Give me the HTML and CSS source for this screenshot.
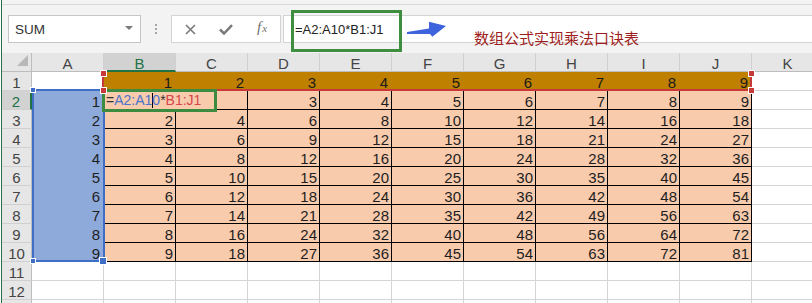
FILE: index.html
```html
<!DOCTYPE html>
<html lang="zh-CN">
<head>
<meta charset="utf-8">
<title>数组公式实现乘法口诀表</title>
<link rel="stylesheet" href="styles.css">
</head>
<body>
<div class="app">
  <div class="edge"></div>
  <div class="fbar">
    <div class="namebox"><span>SUM</span><span class="dd"></span></div>
    <div class="grip"><i></i><i></i><i></i></div>
    <div class="fbtns">
      <span class="btn"><svg width="11" height="11" viewBox="0 0 11 11"><path d="M1 1L10 10M10 1L1 10" stroke="#7a7a7a" stroke-width="1.6" fill="none"/></svg></span>
      <span class="btn"><svg width="14" height="11" viewBox="0 0 14 11"><path d="M1 5.5L5 9.5L13 1.2" stroke="#7a7a7a" stroke-width="2.5" fill="none"/></svg></span>
      <span class="btn fx"><i>f</i><i class="sx">x</i></span>
    </div>
    <div class="finput">
      <span class="ftext">=A2:A10*B1:J1</span>
      <svg class="arrow" width="40" height="16" viewBox="0 0 40 16"><polygon points="0,11 22,7.5 22,0.7 39,5 25.3,15.7 23,13 0,13" fill="#3d63dd"/></svg>
      <span class="note">数组公式实现乘法口诀表</span>
      <div class="hl"></div>
    </div>
  </div>
  <div class="sheet">
    <div class="grid">
      <div class="corner"></div><div class="ch">A</div><div class="ch sel">B</div><div class="ch">C</div><div class="ch">D</div><div class="ch">E</div><div class="ch">F</div><div class="ch">G</div><div class="ch">H</div><div class="ch">I</div><div class="ch">J</div><div class="ch">K</div>

      <div class="rh">1</div><div></div><div class="g">1</div><div class="g">2</div><div class="g">3</div><div class="g">4</div><div class="g">5</div><div class="g">6</div><div class="g">7</div><div class="g">8</div><div class="g">9</div><div></div>

      <div class="rh sel">2</div><div class="b">1</div><div class="p"></div><div class="p"></div><div class="p">3</div><div class="p">4</div><div class="p">5</div><div class="p">6</div><div class="p">7</div><div class="p">8</div><div class="p">9</div><div></div>

      <div class="rh">3</div><div class="b">2</div><div class="p">2</div><div class="p">4</div><div class="p">6</div><div class="p">8</div><div class="p">10</div><div class="p">12</div><div class="p">14</div><div class="p">16</div><div class="p">18</div><div></div>

      <div class="rh">4</div><div class="b">3</div><div class="p">3</div><div class="p">6</div><div class="p">9</div><div class="p">12</div><div class="p">15</div><div class="p">18</div><div class="p">21</div><div class="p">24</div><div class="p">27</div><div></div>

      <div class="rh">5</div><div class="b">4</div><div class="p">4</div><div class="p">8</div><div class="p">12</div><div class="p">16</div><div class="p">20</div><div class="p">24</div><div class="p">28</div><div class="p">32</div><div class="p">36</div><div></div>

      <div class="rh">6</div><div class="b">5</div><div class="p">5</div><div class="p">10</div><div class="p">15</div><div class="p">20</div><div class="p">25</div><div class="p">30</div><div class="p">35</div><div class="p">40</div><div class="p">45</div><div></div>

      <div class="rh">7</div><div class="b">6</div><div class="p">6</div><div class="p">12</div><div class="p">18</div><div class="p">24</div><div class="p">30</div><div class="p">36</div><div class="p">42</div><div class="p">48</div><div class="p">54</div><div></div>

      <div class="rh">8</div><div class="b">7</div><div class="p">7</div><div class="p">14</div><div class="p">21</div><div class="p">28</div><div class="p">35</div><div class="p">42</div><div class="p">49</div><div class="p">56</div><div class="p">63</div><div></div>

      <div class="rh">9</div><div class="b">8</div><div class="p">8</div><div class="p">16</div><div class="p">24</div><div class="p">32</div><div class="p">40</div><div class="p">48</div><div class="p">56</div><div class="p">64</div><div class="p">72</div><div></div>

      <div class="rh">10</div><div class="b">9</div><div class="p">9</div><div class="p">18</div><div class="p">27</div><div class="p">36</div><div class="p">45</div><div class="p">54</div><div class="p">63</div><div class="p">72</div><div class="p">81</div><div></div>

      <div class="rh">11</div><div></div><div></div><div></div><div></div><div></div><div></div><div></div><div></div><div></div><div></div><div></div>

      <div class="rh">12</div><div></div><div></div><div></div><div></div><div></div><div></div><div></div><div></div><div></div><div></div><div></div>

      <div class="rh"></div><div></div><div></div><div></div><div></div><div></div><div></div><div></div><div></div><div></div><div></div><div></div>
    </div>

    <div class="ref-red"></div>
    <div class="ref-blue"></div>
    <div class="editor"><span class="eq">=</span><span class="rb">A2:A1<span class="caret"></span>0</span><span class="op">*</span><span class="rr">B1:J1</span></div>

    <span class="hd red h-r-tl"></span>
    <span class="hd red h-r-bl"></span>
    <span class="hd red h-r-tr"></span>
    <span class="hd red h-r-br"></span>
    <span class="hd blue h-b-tl"></span>
    <span class="hd blue h-b-bl"></span>
    <span class="hd blue h-b-br"></span>
  </div>
</div>
</body>
</html>
```

FILE: styles.css
```css
* { box-sizing: border-box; }

body {
  margin: 0;
  background: #fff;
  font-family: "Liberation Sans", Arial, sans-serif;
}

.app {
  width: 811px;
  height: 303px;
  margin-left: 1px;
  border-left: 1px solid #217346;
  background: #f3f3f3;
  overflow: hidden;
}

.edge {
  height: 5px;
  border-bottom: 1px solid #d9d9d9;
}

/* formula bar */
.fbar {
  display: flex;
  align-items: flex-start;
  height: 48px;
  padding: 10px 0 10px 6px;
}

.namebox {
  width: 133px;
  height: 28px;
  border: 1px solid #c6c6c6;
  background: #fff;
  display: flex;
  align-items: center;
  padding: 0 7px 0 6px;
  font-size: 13.5px;
  color: #333;
}

.dd {
  margin-left: auto;
  margin-top: -2px;
  border-left: 4px solid transparent;
  border-right: 4px solid transparent;
  border-top: 4px solid #7a7a7a;
}

.grip {
  margin: 9px 0 0 14px;
  display: flex;
  flex-direction: column;
  gap: 2px;
}

.grip i {
  display: block;
  width: 2px;
  height: 2px;
  background: #a6a6a6;
}

.fbtns {
  margin-left: 14px;
  width: 110px;
  height: 28px;
  border: 1px solid #d4d4d4;
  background: #fff;
  display: flex;
}

.btn {
  width: 36px;
  display: flex;
  align-items: center;
  justify-content: center;
}

.fx {
  font-family: "Liberation Serif", "Times New Roman", serif;
  color: #6f6f6f;
  font-size: 15px;
  align-items: baseline;
  padding-top: 3px;
}

.fx .sx {
  font-size: 11px;
  margin-left: 1px;
}

.finput {
  margin-left: 2px;
  flex: 1;
  height: 28px;
  border: 1px solid #d4d4d4;
  border-right: none;
  background: #fff;
  position: relative;
  display: flex;
  align-items: center;
}

.ftext {
  flex: none;
  width: 112px;
  padding-left: 11px;
  font-size: 13px;
  color: #222;
}

.arrow {
  flex: none;
  margin-left: 11px;
}

.note {
  flex: none;
  align-self: flex-start;
  margin-left: 27px;
  margin-top: 13px;
  font-family: "Noto Sans CJK SC", sans-serif;
  font-size: 15px;
  line-height: 18px;
  color: #9e1d20;
  white-space: nowrap;
}

.hl {
  position: absolute;
  left: 7px;
  top: -6px;
  width: 111px;
  height: 42px;
  border: 3px solid #3f8e3f;
}

/* sheet */
.sheet {
  position: relative;
}

.grid {
  display: grid;
  grid-template-columns: 30px repeat(11, 72px);
  grid-auto-rows: 19px;
  font-size: 15px;
  color: #1e1e1e;
}

.grid > div {
  border-right: 1px solid #d4d4d4;
  border-bottom: 1px solid #d4d4d4;
  background: #fff;
  overflow: hidden;
  white-space: nowrap;
  line-height: 17px;
  padding-top: 2px;
}

.grid .corner {
  background: #e6e6e6;
  position: relative;
  border-right-color: #bdbdbd;
  border-bottom-color: #bdbdbd;
}

.grid .corner::after {
  content: "";
  position: absolute;
  right: 3px;
  bottom: 5px;
  border-left: 11px solid transparent;
  border-bottom: 11px solid #b8b8b8;
}

.grid .ch {
  background: #e6e6e6;
  text-align: center;
  color: #444;
  border-right-color: #d0d0d0;
  border-bottom-color: #bdbdbd;
}

.grid .ch.sel {
  background: #d2d2d2;
  color: #217346;
  border-bottom: 2px solid #217346;
}

.grid .rh {
  background: #e6e6e6;
  text-align: center;
  color: #444;
  border-right-color: #bdbdbd;
  border-bottom-color: #d0d0d0;
}

.grid .rh.sel {
  background: #d2d2d2;
  color: #217346;
  border-right: 2px solid #217346;
}

.grid .g {
  background: #bf8000;
  border-color: #bf8000;
  text-align: right;
  padding-right: 3px;
  color: #1a1a1a;
}

.grid .b {
  background: #8eaadb;
  border-color: #8eaadb;
  text-align: right;
  padding-right: 3px;
}

.grid .p {
  background: #f8cbad;
  border-color: #000;
  text-align: right;
  padding-right: 2px;
}

/* reference highlights (overlays) */
.ref-red {
  position: absolute;
  left: 100px;
  top: 19px;
  width: 650px;
  height: 19px;
  border: 2px solid #c63a3a;
  border-top: none;
}

.ref-blue {
  position: absolute;
  left: 30px;
  top: 36px;
  width: 73px;
  height: 173px;
  border: 2px solid #3e6ec6;
}

.editor {
  position: absolute;
  left: 100px;
  top: 36px;
  width: 115px;
  height: 23px;
  border: 3px solid #3d8b40;
  background: #f8cbad;
  font-size: 14px;
  line-height: 17px;
  padding-left: 1px;
  white-space: nowrap;
  overflow: hidden;
}

.eq, .op { color: #333; }
.rb { color: #4a73c9; }
.rr { color: #d6454b; }

.caret {
  display: inline-block;
  width: 1px;
  height: 15px;
  margin-right: -1px;
  background: #000;
  vertical-align: -3px;
}

.hd {
  position: absolute;
  width: 7px;
  height: 7px;
  border: 1px solid #fff;
}

.hd.red { background: #c63a3a; }
.hd.blue { background: #3e6ec6; }

.h-r-tl { left: 98px; top: 17px; }
.h-r-bl { left: 98px; top: 34px; }
.h-r-tr { left: 746px; top: 17px; }
.h-r-br { left: 746px; top: 34px; }

.h-b-tl { left: 28px; top: 34px; width: 6px; height: 6px; }
.h-b-bl { left: 28px; top: 205px; width: 6px; height: 6px; }
.h-b-br { left: 97px; top: 204px; width: 8px; height: 8px; }
```
